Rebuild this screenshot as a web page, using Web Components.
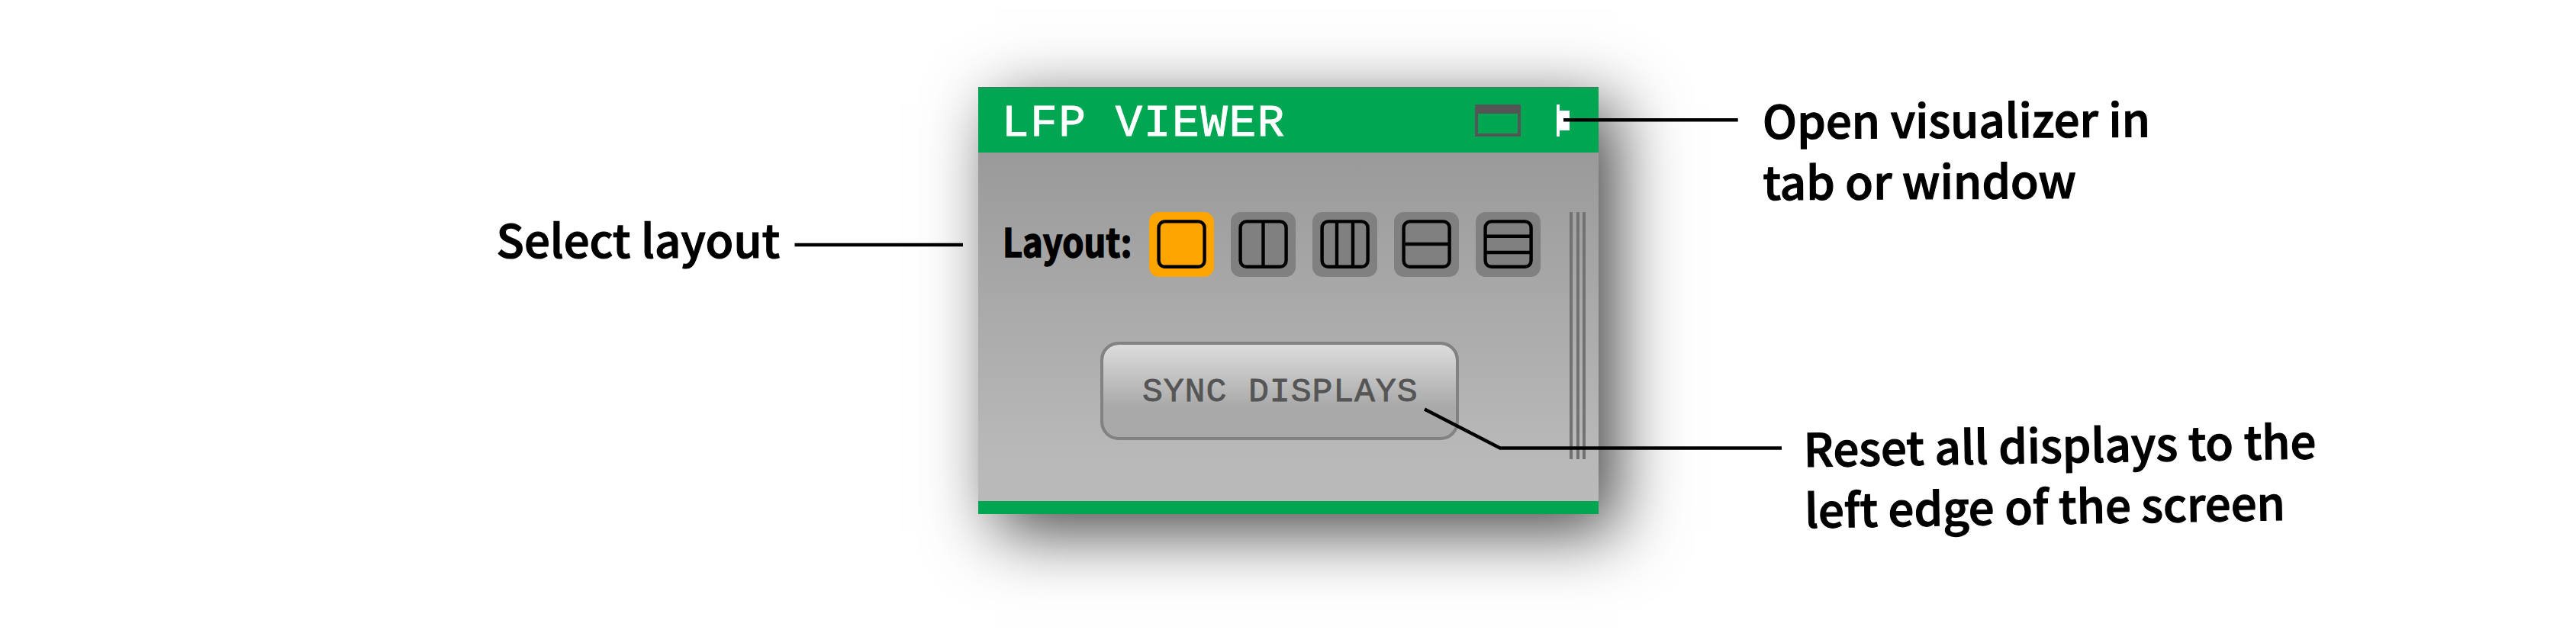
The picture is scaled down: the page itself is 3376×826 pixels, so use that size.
<!DOCTYPE html>
<html lang="en">
<head>
<meta charset="utf-8">
<title>LFP Viewer</title>
<style>
body { margin: 0; background: #fff; overflow: hidden; }
</style>
</head>
<body>
<lfp-figure></lfp-figure>
<script>
class LayoutButton extends HTMLElement {
  connectedCallback() {
    const lines = {
      single: '',
      columns2: '<path d="M42.5 14V71"/>',
      columns3: '<path d="M32 14V71M53 14V71"/>',
      rows2: '<path d="M14 42H72"/>',
      rows3: '<path d="M14 31.7H72M14 53H72"/>'
    };
    const inner = lines[this.getAttribute('kind')] || '';
    this.attachShadow({ mode: 'open' }).innerHTML = `
      <style>
        :host { display: block; width: 85px; height: 85px; border-radius: 13px; background: #808080; }
        :host([active]) { background: #ffa500; }
        svg { display: block; }
      </style>
      <svg width="85" height="85" viewBox="0 0 85 85" fill="none" stroke="#000" stroke-width="4.4">
        <rect x="12.6" y="12.4" width="60" height="59.4" rx="8"/>${inner}
      </svg>`;
  }
}
customElements.define('layout-button', LayoutButton);

class SyncButton extends HTMLElement {
  connectedCallback() {
    this.attachShadow({ mode: 'open' }).innerHTML = `
      <style>
        :host { display: flex; box-sizing: border-box; width: 470px; height: 129px; padding-left: 51px;
          border: 4.5px solid #828282; border-radius: 24px;
          background: linear-gradient(#dcdcdc, #c2c2c2 35%, #a9a9a9 67%, #a9a9a9) padding-box, #828282 border-box; }
        span { font: 45px/125px "Liberation Mono", monospace; letter-spacing: .8px; color: #555;
          white-space: pre; -webkit-text-stroke: .8px #555; }
      </style>
      <span><slot></slot></span>`;
  }
}
customElements.define('sync-button', SyncButton);

class ViewerWindow extends HTMLElement {
  connectedCallback() {
    this.attachShadow({ mode: 'open' }).innerHTML = `
      <style>
        :host { display: flex; flex-direction: column; width: 813px; height: 560px;
          box-shadow: 23px 23px 84px rgba(0,0,0,.73); }
        header { display: flex; align-items: flex-start; height: 86.5px; background: #00a651;
          box-sizing: border-box; padding: 0 38px 0 31px; border-top: 1px solid #56705f; }
        h1 { margin: 0; flex: 1; font: 400 59px/95px "Liberation Mono", monospace; letter-spacing: 1.8px;
          color: #fff; white-space: pre; -webkit-text-stroke: 1px #fff; }
        header svg { margin-top: 22px; }
        .body { display: flex; flex: 1; background: linear-gradient(#9a9a9a, #b9b9b9 88%, #bababa); }
        .main { width: 775px; }
        .row { display: flex; height: 85px; margin-top: 77.5px; padding-left: 32px; gap: 22px; }
        .label { width: 170px; font: 700 51px/74px "Noto Sans CJK JP", sans-serif; color: #000;
          white-space: nowrap; -webkit-text-stroke: 1.6px #000; }
        .label span { display: inline-block; transform-origin: 0 50%; transform: scaleX(.885); }
        sync-button { margin: 85px 0 0 160px; }
        .grip { display: flex; gap: 4.6px; height: 324px; margin-top: 77.5px; }
        .grip i { width: 4px; background: #717171; }
        footer { height: 16.5px; background: #00a651; }
      </style>
      <header><h1>LFP VIEWER</h1>
        <svg width="124" height="42" viewBox="0 0 124 42">
          <path fill="#555" fill-rule="evenodd" d="M0 0H60V42H0ZM4 12V38H56V12Z"/>
          <path fill="#fff" d="M107 0H111V8H124V34H111V42H107Z"/>
        </svg>
      </header>
      <div class="body">
        <div class="main">
          <div class="row"><div class="label"><span>Layout:</span></div>
            <layout-button kind="single" active></layout-button>
            <layout-button kind="columns2"></layout-button>
            <layout-button kind="columns3"></layout-button>
            <layout-button kind="rows2"></layout-button>
            <layout-button kind="rows3"></layout-button>
          </div>
          <sync-button>SYNC DISPLAYS</sync-button>
        </div>
        <div class="grip"><i></i><i></i><i></i></div>
      </div>
      <footer></footer>`;
  }
}
customElements.define('viewer-window', ViewerWindow);

class CalloutText extends HTMLElement {
  connectedCallback() {
    this.attachShadow({ mode: 'open' }).innerHTML = `
      <style>
        :host { display: block; font: 500 59.9px/80px "Noto Sans CJK JP", sans-serif; color: #000;
          white-space: nowrap; transform-origin: 0 60px; -webkit-text-stroke: 1.2px #000; }
      </style><slot></slot>`;
  }
}
customElements.define('callout-text', CalloutText);

class LfpFigure extends HTMLElement {
  connectedCallback() {
    this.attachShadow({ mode: 'open' }).innerHTML = `
      <style>
        :host { display: grid; grid-template-columns: 1282px 813px 1fr; position: relative; width: 3376px; height: 826px; }
        .left { padding: 272px 0 0 650.5px; }
        .center { padding-top: 113.5px; }
        .right { display: flex; flex-direction: column; padding: 115.5px 0 0 215px; gap: 270px; }
        .open { transform: rotate(-.3deg); }
        .reset { margin-left: 54px; transform: rotate(-.92deg); }
        .lines { position: absolute; inset: 0; pointer-events: none; }
      </style>
      <div class="left"><callout-text>Select layout</callout-text></div>
      <div class="center"><viewer-window></viewer-window></div>
      <div class="right">
        <callout-text class="open">Open visualizer in<br>tab or window</callout-text>
        <callout-text class="reset">Reset all displays to the<br>left edge of the screen</callout-text>
      </div>
      <svg class="lines" width="3376" height="826" fill="none" stroke="#000" stroke-width="4.4">
        <path d="M1041.5 321H1262M2049 157.3H2277.7M1867 536.5L1966 587.5H2335"/>
      </svg>`;
  }
}
customElements.define('lfp-figure', LfpFigure);
</script>
</body>
</html>
